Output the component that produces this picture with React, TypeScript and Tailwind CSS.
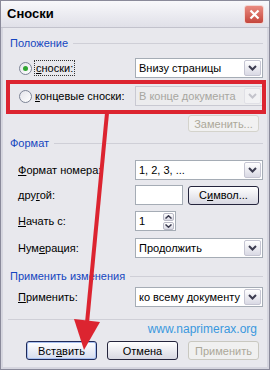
import React from 'react';

// Диалог «Сноски» в стиле Windows XP (серебристая тема)

function Chevron({ disabled = false }: { disabled?: boolean }) {
  return (
    <svg width="9" height="6" viewBox="0 0 9 6">
      <polyline
        points="1,1 4.5,4.5 8,1"
        fill="none"
        stroke={disabled ? '#c4c4cc' : '#3c3c50'}
        strokeWidth="2"
      />
    </svg>
  );
}

function Select({ value, disabled = false }: { value: string; disabled?: boolean }) {
  return (
    <div
      className={`flex-1 h-[20px] flex items-center border ${
        disabled ? 'border-[#c9c9d2] bg-[#ececee] text-[#a7a6a0]' : 'border-[#a5acb5] bg-white text-black'
      }`}
    >
      <span className="flex-1 pl-[3px] whitespace-nowrap overflow-hidden">{value}</span>
      <div
        className={`w-[17px] h-[16px] mr-[1px] flex items-center justify-center rounded-[2px] border ${
          disabled
            ? 'border-[#e0e0e6] bg-[#f2f2f4]'
            : 'border-[#c5c5d2] bg-gradient-to-b from-[#ffffff] to-[#d9d9e4]'
        }`}
      >
        <Chevron disabled={disabled} />
      </div>
    </div>
  );
}

function Button({ children, disabled = false, primary = false }: { children: React.ReactNode; disabled?: boolean; primary?: boolean }) {
  return (
    <div
      className={`w-[71px] h-[19px] flex items-center justify-center rounded-[3px] border ${
        disabled
          ? 'border-[#c9c8c0] bg-[#f0f0f0] text-[#aca899]'
          : primary
          ? 'border-[#1f2a5a] bg-gradient-to-b from-[#ffffff] to-[#d6dcee] shadow-[inset_0_0_0_1px_#a8c0f0]'
          : 'border-[#25253d] bg-gradient-to-b from-[#ffffff] to-[#d8d8e2]'
      }`}
    >
      {children}
    </div>
  );
}

function GroupHeader({ title }: { title: string }) {
  return (
    <div className="h-[14px] flex items-center gap-[5px] pl-[1px]">
      <span className="text-[#1546c0] whitespace-nowrap">{title}</span>
      <div className="flex-1 h-px bg-[#cfcfd7]" />
    </div>
  );
}

function Radio({ checked = false }: { checked?: boolean }) {
  return (
    <div className="w-[13px] h-[13px] rounded-full border border-[#7d8496] bg-gradient-to-br from-[#e4e4ea] to-[#ffffff] flex items-center justify-center">
      {checked && <div className="w-[5px] h-[5px] rounded-full bg-[#2fa52f]" />}
    </div>
  );
}

export default function App() {
  return (
    <div className="relative w-[270px] h-[370px] overflow-hidden border border-[#8a8a9a] bg-[#d6d6df] flex flex-col font-['Liberation_Sans',Arial,sans-serif] text-[11px] leading-[14px] text-black">
      {/* Заголовок окна */}
      <div className="h-[27px] shrink-0 flex items-center justify-between pl-[6px] pr-[5px] bg-gradient-to-b from-[#f8f8fb] to-[#e0e0e8] border-b border-[#c2c2cc]">
        <span className="text-[13px] font-bold">Сноски</span>
        <div className="w-[20px] h-[19px] rounded-[3px] border border-[#f3d7d3] bg-gradient-to-b from-[#e98a80] to-[#c4453c] flex items-center justify-center">
          <svg width="11" height="11" viewBox="0 0 11 11">
            <path d="M1.5 1.5 L9.5 9.5 M9.5 1.5 L1.5 9.5" stroke="#ffffff" strokeWidth="2.2" />
          </svg>
        </div>
      </div>

      {/* Тело диалога */}
      <div className="flex-1 mx-[2px] mb-[2px] bg-[#e8e8ed] flex flex-col pl-[6px] pr-[4px] pt-[8px]">
        <GroupHeader title="Положение" />

        <div className="mt-[8px] h-[20px] flex items-center">
          <div className="w-[126px] flex items-center pl-[10px] gap-[2px]">
            <Radio checked />
            <span className="px-[1px] border border-dotted border-[#333]">
              <span className="underline">с</span>носки:
            </span>
          </div>
          <Select value="Внизу страницы" />
        </div>

        <div className="mt-[8px] h-[20px] flex items-center">
          <div className="w-[126px] flex items-center pl-[10px] gap-[3px]">
            <Radio />
            <span className="whitespace-nowrap">
              <span className="underline">к</span>онцевые сноски:
            </span>
          </div>
          <Select value="В конце документа" disabled />
        </div>

        <div className="mt-[9px] flex justify-end pr-[4px]">
          <div className="w-[71px] h-[17px] flex items-center justify-center rounded-[3px] border border-[#d4d3cc] bg-[#f1f1f1] text-[#aca899]">
            Заменить...
          </div>
        </div>

        <div className="mt-[4px]">
          <GroupHeader title="Формат" />
        </div>

        <div className="mt-[10px] h-[20px] flex items-center">
          <span className="w-[126px] pl-[9px]">
            <span className="underline">Ф</span>ормат номера:
          </span>
          <Select value="1, 2, 3, ..." />
        </div>

        <div className="mt-[5px] h-[20px] flex items-center">
          <span className="w-[126px] pl-[9px]">
            дру<span className="underline">г</span>ой:
          </span>
          <div className="w-[48px] h-[20px] border border-[#a5acb5] bg-white" />
          <div className="flex-1" />
          <div className="pr-[4px]">
            <Button>
              С<span className="underline">и</span>мвол...
            </Button>
          </div>
        </div>

        <div className="mt-[6px] h-[20px] flex items-center">
          <span className="w-[126px] pl-[9px]">
            <span className="underline">Н</span>ачать с:
          </span>
          <div className="w-[41px] h-[20px] border border-[#a5acb5] bg-white flex items-center">
            <span className="flex-1 pl-[3px]">1</span>
            <div className="w-[11px] mr-[1px] flex flex-col gap-px">
              <div className="h-[8px] rounded-[2px] border border-[#b9b9c6] bg-gradient-to-b from-white to-[#d9d9e3] flex items-center justify-center">
                <svg width="7" height="4" viewBox="0 0 7 4">
                  <polyline points="0.5,3.5 3.5,0.8 6.5,3.5" fill="none" stroke="#3c3c50" strokeWidth="1.5" />
                </svg>
              </div>
              <div className="h-[8px] rounded-[2px] border border-[#b9b9c6] bg-gradient-to-b from-white to-[#d9d9e3] flex items-center justify-center">
                <svg width="7" height="4" viewBox="0 0 7 4">
                  <polyline points="0.5,0.5 3.5,3.2 6.5,0.5" fill="none" stroke="#3c3c50" strokeWidth="1.5" />
                </svg>
              </div>
            </div>
          </div>
        </div>

        <div className="mt-[7px] h-[20px] flex items-center">
          <span className="w-[126px] pl-[9px]">
            Нум<span className="underline">е</span>рация:
          </span>
          <Select value="Продолжить" />
        </div>

        <div className="mt-[11px]">
          <GroupHeader title="Применить изменения" />
        </div>

        <div className="mt-[4px] h-[20px] flex items-center">
          <span className="w-[126px] pl-[9px]">
            <span className="underline">П</span>рименить:
          </span>
          <Select value="ко всему документу" />
        </div>

        <div className="mt-[12px] h-px bg-[#cfcfd7] -ml-[1px]" />

        <div className="mt-[2px] h-[14px] flex justify-end pr-[6px] text-[12px] text-[#3a98de]">
          www.naprimerax.org
        </div>

        <div className="mt-[5px] flex justify-end gap-[10px] pr-[4px]">
          <Button primary>
            Вст<span className="underline">а</span>вить
          </Button>
          <Button>Отмена</Button>
          <Button disabled>Применить</Button>
        </div>
      </div>

      {/* Пометки поверх окна: рамка и стрелка */}
      <svg className="absolute inset-0 pointer-events-none" width="270" height="370" viewBox="0 0 270 370">
        <rect x="7" y="81" width="256" height="30" fill="none" stroke="#dc2430" strokeWidth="4" />
        <line x1="106" y1="112" x2="86" y2="322" stroke="#dc2430" strokeWidth="4" />
        <polygon points="73,318 99,321 83,349" fill="#dc2430" />
      </svg>
    </div>
  );
}
